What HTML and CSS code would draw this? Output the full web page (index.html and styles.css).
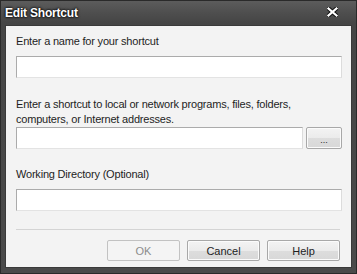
FILE: index.html
```html
<!DOCTYPE html>
<html lang="en">
<head>
    <meta charset="UTF-8">
    <title>Edit Shortcut</title>
    <link rel="stylesheet" href="styles.css">
</head>
<body>
    <div class="window">
        <div class="titlebar">
            <span class="title">Edit Shortcut</span>
            <span class="close">
                <svg width="11" height="10" viewBox="0 0 11 10">
                    <path d="M1.5 1.5 L9.5 8.5 M9.5 1.5 L1.5 8.5" stroke="#111" stroke-width="4.2" stroke-linecap="square"/>
                    <path d="M1.5 1.5 L9.5 8.5 M9.5 1.5 L1.5 8.5" stroke="#fff" stroke-width="2.2" stroke-linecap="square"/>
                </svg>
            </span>
        </div>

        <form class="client">
            <!-- Name -->
            <div class="form-group">
                <label for="name">Enter a name for your shortcut</label>
                <input type="text" id="name">
            </div>

            <!-- Target -->
            <div class="form-group">
                <label for="target">Enter a shortcut to local or network programs, files, folders,<br>computers, or Internet addresses.</label>
                <div class="row">
                    <input type="text" id="target">
                    <button type="button" class="browse">...</button>
                </div>
            </div>

            <!-- Working directory -->
            <div class="form-group">
                <label for="workdir">Working Directory (Optional)</label>
                <input type="text" id="workdir">
            </div>

            <hr class="separator">

            <div class="buttons">
                <button type="submit" disabled>OK</button>
                <button type="button">Cancel</button>
                <button type="button">Help</button>
            </div>
        </form>
    </div>
</body>
</html>
```

FILE: styles.css
```css
body {
    margin: 0;
    font-family: "Liberation Sans", Arial, sans-serif;
}
.window {
    width: 357px;
    height: 274px;
    box-sizing: border-box;
    border: 1px solid #2a2a2a;
    background: linear-gradient(to bottom, #5c5c5c 0px, #4e4e4e 12px, #454545 22px, #4a4a4a 100%);
    display: flex;
    flex-direction: column;
}
.titlebar {
    height: 24px;
    display: flex;
    align-items: center;
    justify-content: space-between;
    padding: 0 0 0 4px;
}
.title {
    color: #fff;
    font-weight: bold;
    font-size: 12px;
    letter-spacing: -0.2px;
    text-shadow: 0 0 3px #000, 0 0 2px #000;
    margin-top: -1px;
}
.close {
    display: flex;
    margin-right: 18px;
    margin-top: -2px;
}
.client {
    margin: 0 4px 0 4px;
    height: 243px;
    box-sizing: border-box;
    background: #f3f3f3;
    border: 1px solid #3a3a3a;
    padding: 8px 9px 0 10px;
    font-size: 11px;
    letter-spacing: -0.2px;
    color: #1e1e1e;
}
.form-group {
    margin-bottom: 18px;
}
.form-group:first-child {
    margin-bottom: 19px;
}
label {
    display: block;
    line-height: 15px;
    margin-bottom: 7px;
}
.form-group:nth-child(2) label {
    margin-bottom: 0;
}
input {
    display: block;
    width: 100%;
    height: 22px;
    box-sizing: border-box;
    margin: 0;
    background: #fff;
    border: 1px solid #ababab;
    border-right-color: #dcdcdc;
    border-bottom-color: #e3e3e3;
    outline: none;
}
.row {
    display: flex;
    gap: 3px;
}
.row input {
    width: 287px;
    flex: none;
}
button {
    font-family: "Liberation Sans", Arial, sans-serif;
    font-size: 11px;
    color: #1e1e1e;
    height: 21px;
    padding: 0;
    border: 1px solid #a8a8a8;
    border-radius: 2px;
    background: linear-gradient(to bottom, #f3f3f3 0%, #ebebeb 50%, #dddddd 51%, #d8d8d8 100%);
    box-shadow: inset 0 0 0 1px #fbfbfb;
}
.browse {
    width: 36px;
    height: 22px;
    font-size: 9px;
    padding-top: 3px;
}
.separator {
    border: none;
    border-top: 1px solid #d4d4d4;
    margin: 15px 2px 10px 0;
}
.buttons {
    display: flex;
    justify-content: flex-end;
    gap: 7px;
    padding-right: 2px;
}
.buttons button {
    width: 73px;
}
.buttons button:disabled {
    color: #8c8c8c;
    background: #f4f4f4;
    border-color: #c2c2c2;
    box-shadow: none;
}
```
